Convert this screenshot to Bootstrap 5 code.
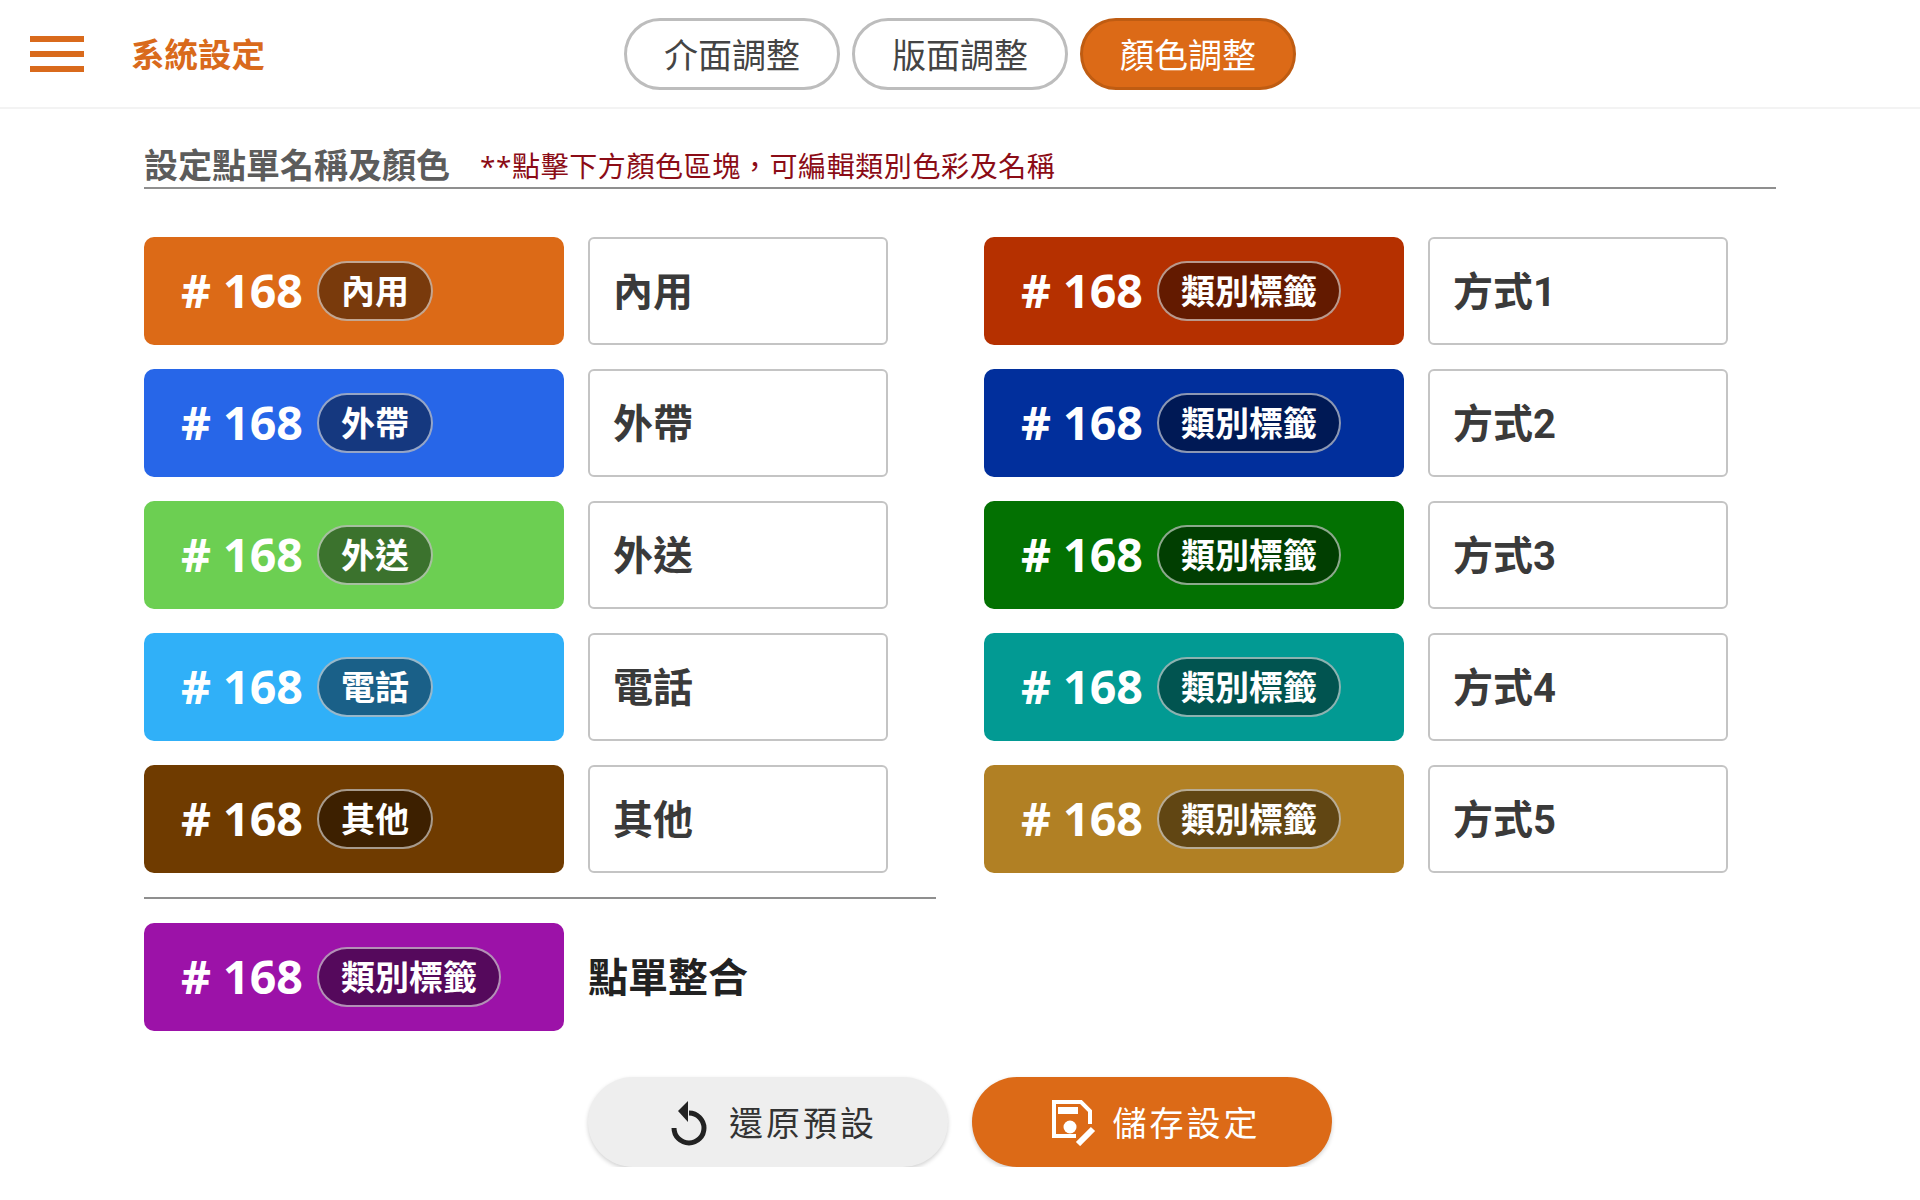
<!DOCTYPE html>
<html lang="zh-Hant">
<head>
  <meta charset="UTF-8">
  <title>系統設定</title>
  <link href="https://cdn.jsdelivr.net/npm/bootstrap@5.3.2/dist/css/bootstrap.min.css" rel="stylesheet">
  <style>
    body { background: #fff; font-family: "Open Sans", "Noto Sans CJK TC", sans-serif; color: #333; }
    .top-bar { height: 109px; border-bottom: 2px solid #f3f3f3; padding-left: 30px; position: relative; }
    .burger { width: 54px; height: 36px; display: flex; flex-direction: column; justify-content: space-between; }
    .burger span { height: 6px; background: #d96a1c; }
    .app-title { margin-left: 47px; margin-top: 2px; font-size: 33.5px; font-weight: 700; color: #d96a1c; line-height: 1; }
    .tab-group { position: absolute; left: 624px; top: 18px; gap: 12px; }
    .tab-btn { width: 216px; height: 72px; border-radius: 36px; border: 3px solid #bdbdbd; background: #fff; color: #444; font-size: 34px; line-height: 1; padding: 2px 0 0; }
    .tab-btn.on { background: #dc6a17; border-color: #bf5c12; color: #fff; }
    .main-area { padding: 36px 144px 0; }
    .sec-head { border-bottom: 2px solid #8f8f8f; height: 44px; width: 1632px; }
    .sec-title { font-size: 34px; font-weight: 700; color: #5c5c5c; line-height: 1; margin-top: -3px; }
    .sec-note { font-size: 28px; color: #8b0c16; margin-left: 30px; line-height: 1; letter-spacing: .6px; }
    .color-cols { margin-top: 48px; gap: 48px; }
    .color-col { width: 792px; gap: 24px; }
    .color-row { gap: 24px; height: 108px; }
    .swatch { width: 420px; height: 108px; border-radius: 10px; padding-left: 37px; color: #fff; gap: 14px; }
    .order-no { font-size: 46.5px; font-weight: 700; line-height: 1; white-space: nowrap; margin-top: -2px; }
    .tag-pill { height: 60px; padding: 0 22px; border-radius: 30px; border: 2px solid rgba(255,255,255,.55); background: rgba(0,0,0,.45); font-size: 34px; font-weight: 700; line-height: 1; }
    .name-box { width: 300px; height: 108px; border: 2px solid #c4c4c4; border-radius: 6px; padding: 3px 0 0 23px; font-family: Roboto, "Noto Sans CJK TC", sans-serif; font-size: 40px; font-weight: 700; color: #3a3a3a; line-height: 1; background: #fff; }
    .thin-rule { height: 2px; background: #8f8f8f; width: 792px; margin: 24px 0; }
    .merge-label { font-size: 40px; font-weight: 700; color: #222; line-height: 1; }
    .action-row { margin-top: 46px; margin-left: 444px; gap: 24px; }
    .act-btn { width: 360px; height: 90px; border-radius: 45px; border: 0; font-size: 34px; letter-spacing: 3px; box-shadow: 0 2px 4px rgba(0,0,0,.18); }
    .act-reset { background: #eeeeee; color: #333; gap: 22px; padding: 2px 0 0 12px; }
    .act-save { background: #dc6a17; color: #fff; gap: 17px; padding: 2px 0 0 8px; }
    .bg-a { background: #dc6a17; } .bg-b { background: #2766e8; } .bg-c { background: #6ccf52; }
    .bg-d { background: #30b0f8; } .bg-e { background: #6f3b00; } .bg-f { background: #b53000; }
    .bg-g { background: #012f9c; } .bg-h { background: #037102; } .bg-i { background: #029a93; }
    .bg-j { background: #b18024; } .bg-k { background: #9c12a8; }
  </style>
</head>
<body>
  <header class="top-bar d-flex align-items-center">
    <div class="burger"><span></span><span></span><span></span></div>
    <div class="app-title">系統設定</div>
    <div class="tab-group d-flex">
      <button class="tab-btn">介面調整</button>
      <button class="tab-btn">版面調整</button>
      <button class="tab-btn on">顏色調整</button>
    </div>
  </header>
  <main class="main-area">
    <div class="sec-head d-flex align-items-center">
      <span class="sec-title">設定點單名稱及顏色</span>
      <span class="sec-note">**點擊下方顏色區塊，可編輯類別色彩及名稱</span>
    </div>
    <div class="color-cols d-flex">
      <div class="color-col d-flex flex-column">
        <div class="color-row d-flex"><div class="swatch bg-a d-flex align-items-center"><span class="order-no"># 168</span><span class="tag-pill d-flex align-items-center">內用</span></div><div class="name-box d-flex align-items-center">內用</div></div>
        <div class="color-row d-flex"><div class="swatch bg-b d-flex align-items-center"><span class="order-no"># 168</span><span class="tag-pill d-flex align-items-center">外帶</span></div><div class="name-box d-flex align-items-center">外帶</div></div>
        <div class="color-row d-flex"><div class="swatch bg-c d-flex align-items-center"><span class="order-no"># 168</span><span class="tag-pill d-flex align-items-center">外送</span></div><div class="name-box d-flex align-items-center">外送</div></div>
        <div class="color-row d-flex"><div class="swatch bg-d d-flex align-items-center"><span class="order-no"># 168</span><span class="tag-pill d-flex align-items-center">電話</span></div><div class="name-box d-flex align-items-center">電話</div></div>
        <div class="color-row d-flex"><div class="swatch bg-e d-flex align-items-center"><span class="order-no"># 168</span><span class="tag-pill d-flex align-items-center">其他</span></div><div class="name-box d-flex align-items-center">其他</div></div>
      </div>
      <div class="color-col d-flex flex-column">
        <div class="color-row d-flex"><div class="swatch bg-f d-flex align-items-center"><span class="order-no"># 168</span><span class="tag-pill d-flex align-items-center">類別標籤</span></div><div class="name-box d-flex align-items-center">方式1</div></div>
        <div class="color-row d-flex"><div class="swatch bg-g d-flex align-items-center"><span class="order-no"># 168</span><span class="tag-pill d-flex align-items-center">類別標籤</span></div><div class="name-box d-flex align-items-center">方式2</div></div>
        <div class="color-row d-flex"><div class="swatch bg-h d-flex align-items-center"><span class="order-no"># 168</span><span class="tag-pill d-flex align-items-center">類別標籤</span></div><div class="name-box d-flex align-items-center">方式3</div></div>
        <div class="color-row d-flex"><div class="swatch bg-i d-flex align-items-center"><span class="order-no"># 168</span><span class="tag-pill d-flex align-items-center">類別標籤</span></div><div class="name-box d-flex align-items-center">方式4</div></div>
        <div class="color-row d-flex"><div class="swatch bg-j d-flex align-items-center"><span class="order-no"># 168</span><span class="tag-pill d-flex align-items-center">類別標籤</span></div><div class="name-box d-flex align-items-center">方式5</div></div>
      </div>
    </div>
    <div class="thin-rule"></div>
    <div class="color-row d-flex align-items-center">
      <div class="swatch bg-k d-flex align-items-center"><span class="order-no"># 168</span><span class="tag-pill d-flex align-items-center">類別標籤</span></div>
      <div class="merge-label">點單整合</div>
    </div>
    <div class="action-row d-flex">
      <button class="act-btn act-reset d-flex align-items-center justify-content-center">
        <svg width="36" height="46" viewBox="0 0 36 46" fill="none"><path d="M18 13 A15 15 0 1 1 3 28" stroke="#222" stroke-width="5"/><path d="M7 11 L17 1 V22 Z" fill="#222"/></svg>
        <span>還原預設</span>
      </button>
      <button class="act-btn act-save d-flex align-items-center justify-content-center">
        <svg width="44" height="46" viewBox="0 0 44 46" fill="none"><path d="M24 36 H2 V2 H29 L38 11 V24" stroke="#fff" stroke-width="4"/><rect x="6" y="7" width="20" height="7" fill="#fff"/><circle cx="18" cy="27" r="6.5" fill="#fff"/><path d="M26 44 L41 29" stroke="#fff" stroke-width="6"/></svg>
        <span>儲存設定</span>
      </button>
    </div>
  </main>
</body>
</html>
